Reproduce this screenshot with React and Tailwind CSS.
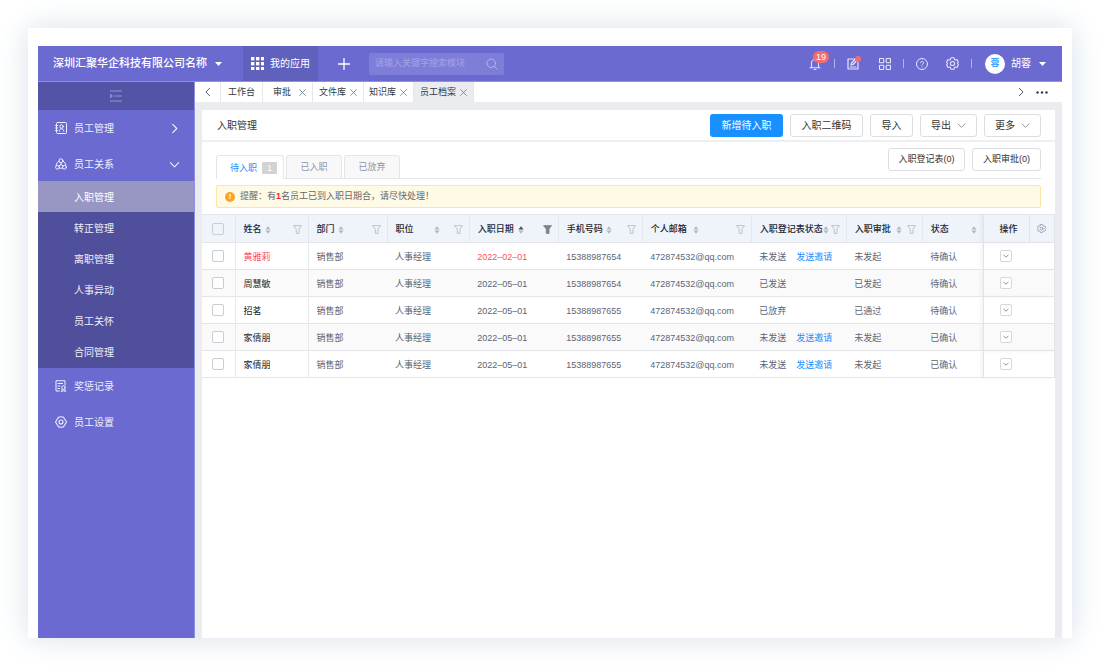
import React, { useState } from 'react';

const CRUMBS = [
  { label: '工作台', width: 'w-[42px] justify-center', closable: false },
  { label: '审批', width: 'w-[50px] justify-end gap-2 pr-[6px]', closable: true },
  { label: '文件库', width: 'w-[51px] justify-end gap-1 pr-[6px]', closable: true },
  { label: '知识库', width: 'w-[50px] justify-end gap-1 pr-[6px]', closable: true },
  { label: '员工档案', width: 'w-[60px] justify-end gap-1 pr-[6px]', closable: true },
];

const SUB_MENU = ['入职管理', '转正管理', '离职管理', '人事异动', '员工关怀', '合同管理'];

const COLUMNS = [
  { label: '姓名', width: 'w-[73px]', gap: 'gap-[3px]', filter: true },
  { label: '部门', width: 'w-[79px]', gap: 'gap-[3px]', filter: true },
  { label: '职位', width: 'w-[82px]', gap: 'gap-5', filter: true },
  { label: '入职日期', width: 'w-[89px]', gap: 'gap-1', filter: true, active: true },
  { label: '手机号码', width: 'w-[84px]', gap: 'gap-[3px]', filter: true },
  { label: '个人邮箱', width: 'w-[109px]', gap: 'gap-[6px]', filter: true },
  { label: '入职登记表状态', width: 'w-[95px]', gap: 'gap-0', filter: true },
  { label: '入职审批', width: 'w-[76px]', gap: 'gap-[5px]', filter: true },
  { label: '状态', width: 'w-[61px]', gap: 'gap-[22px]', filter: false },
];

const ROWS = [
  { id: 1, name: '黄雅莉', date: '2022–02–01', phone: '15388987654', form: '未发送', invite: true, approval: '未发起', status: '待确认', urgent: true },
  { id: 2, name: '周慧敏', date: '2022–05–01', phone: '15388987654', form: '已发送', invite: false, approval: '已发起', status: '待确认' },
  { id: 3, name: '招茗', date: '2022–05–01', phone: '15388987655', form: '已放弃', invite: false, approval: '已通过', status: '待确认' },
  { id: 4, name: '家倩朋', date: '2022–05–01', phone: '15388987655', form: '未发送', invite: true, approval: '未发起', status: '已确认' },
  { id: 5, name: '家倩朋', date: '2022–05–01', phone: '15388987655', form: '未发送', invite: true, approval: '未发起', status: '已确认' },
];

function Icon({ className, children, stroke = 1.6 }) {
  return (
    <svg className={`shrink-0 ${className}`} viewBox="0 0 24 24" fill="none" stroke="currentColor" strokeWidth={stroke} strokeLinecap="round" strokeLinejoin="round" aria-hidden="true">
      {children}
    </svg>
  );
}

const Chevron = ({ className, dir = 'down', stroke = 2 }) => (
  <Icon className={className} stroke={stroke}>
    <path d={{ down: 'M3 8l9 9 9-9', right: 'M8 3l9 9-9 9', left: 'M16 3l-9 9 9 9' }[dir]} />
  </Icon>
);

const Close = () => (
  <Icon className="size-[7px] text-slate-500" stroke={2.6}>
    <path d="M2 2l20 20M22 2L2 22" />
  </Icon>
);

const Gear = ({ className, stroke = 2 }) => (
  <Icon className={className} stroke={stroke}>
    <path d="M9.2 1.500h5.600l1 3.200 1.600.900 3.200-.700 2.400 4.700-2.100 2.400 2.100 2.400-2.400 4.700-3.200-.700-1.600.900-1 3.200H9.200l-1-3.200-1.600-.900-3.200.700L1 14.400 3.100 12 1 9.600l2.400-4.700 3.200.700 1.600-.900z" />
    <circle cx="12" cy="12" r="3.800" />
  </Icon>
);

const Caret = ({ className = '' }) => (
  <svg className={`h-1 w-[7px] fill-current ${className}`} viewBox="0 0 7 4" aria-hidden="true"><path d="M0 0h7L3.500 4z" /></svg>
);

const Sorter = ({ active }) => (
  <svg className="h-2 w-[6px] shrink-0" viewBox="0 0 6 8" aria-hidden="true">
    <path d="M3 0.200L5.600 3.400H0.400z" className={active ? 'fill-[#4a5060]' : 'fill-[#b4b7bd]'} />
    <path d="M3 7.800L5.600 4.600H0.400z" className="fill-[#b4b7bd]" />
  </svg>
);

const Funnel = ({ active }) => (
  <svg className={`size-[9px] shrink-0 ${active ? 'fill-[#7c8290] text-[#7c8290]' : 'fill-none text-[#aeb5c4]'}`} viewBox="0 0 18 18" stroke="currentColor" strokeWidth="1.600" strokeLinejoin="round" aria-hidden="true">
    <path d="M1 1.200h16l-5 7v8.600H6.500V8.200z" />
  </svg>
);

function TopBar() {
  return (
    <header className="flex h-9 items-center border-b border-[#8f8fe6] bg-[#6a6ad1] text-white">
      <button type="button" className="flex items-center gap-2 pl-[15px] text-[11px] font-medium whitespace-nowrap">
        深圳汇聚华企科技有限公司名称
        <Caret />
      </button>
      <button type="button" className="ml-[21px] flex h-full items-center gap-[6px] bg-[#6060bd] px-2 text-[10px] whitespace-nowrap">
        <svg className="size-[13px] fill-current" viewBox="0 0 13 13" aria-hidden="true">
          {[0, 5, 10].map(y => [0, 5, 10].map(x => <rect key={`${x}-${y}`} x={x} y={y} width="3.4" height="3.4" />))}
        </svg>
        我的应用
      </button>
      <button type="button" aria-label="新增" className="ml-5">
        <Icon className="size-3" stroke={2.6}><path d="M12 1v22M1 12h22" /></Icon>
      </button>
      <label className="ml-[19px] flex h-[22px] w-[135px] items-center rounded-xs bg-[#7e7ed9] px-[6px]">
        <input type="text" aria-label="搜索" placeholder="请输入关键字搜索模块" className="min-w-0 flex-1 bg-transparent pt-px text-[9px] outline-none placeholder:text-[#a3a3e8]" />
        <Icon className="size-3 text-[#b9b9ee]" stroke={1.8}><circle cx="10.5" cy="10.5" r="8.5" /><path d="M17 17l5 5" /></Icon>
      </label>
      <div className="ml-auto flex items-center pr-4 text-[#e6e6fb]">
        <button type="button" aria-label="通知" className="relative">
          <Icon className="size-3" stroke={2.2}>
            <path d="M5 19V10a7 7 0 0 1 14 0v9M2 19.500h20M10 23h4" />
          </Icon>
          <span className="absolute -top-[7px] left-1 rounded-full bg-[#f56c6c] px-[3px] text-[9px] leading-[12px] text-white">19</span>
        </button>
        <span className="ml-[13px] h-[9px] w-px bg-[#b4b4ea]" />
        <button type="button" aria-label="编辑" className="relative ml-3">
          <Icon className="size-3" stroke={2.400}>
            <path d="M16 2H2v20h20V9M6 18h12M8 14l1-4 9-9 3 3-9 9z" />
          </Icon>
          <span className="absolute -top-[2px] -right-[2px] size-[6px] rounded-full bg-[#f56c6c]" />
        </button>
        <button type="button" aria-label="应用" className="ml-5">
          <Icon className="size-3" stroke={2.200}>
            <rect x="1" y="1" width="8.500" height="8.500" rx="1.500" /><rect x="14.500" y="1" width="8.500" height="8.500" rx="1.500" />
            <rect x="1" y="14.500" width="8.500" height="8.500" rx="1.500" /><rect x="14.500" y="14.500" width="8.500" height="8.500" rx="1.500" />
          </Icon>
        </button>
        <span className="ml-3 h-[9px] w-px bg-[#b4b4ea]" />
        <button type="button" aria-label="帮助" className="ml-3">
          <Icon className="size-3" stroke={2}>
            <circle cx="12" cy="12" r="11" /><path d="M9 9.500a3 3 0 1 1 4.500 2.600c-1 .6-1.500 1.100-1.500 2.200M12 17.500v.3" />
          </Icon>
        </button>
        <button type="button" aria-label="设置" className="ml-[18px]"><Gear className="size-[13px]" /></button>
        <span className="ml-3 h-[9px] w-px bg-[#b4b4ea]" />
        <button type="button" className="ml-[13px] flex items-center gap-[6px] text-[10px] whitespace-nowrap text-white">
          <span className="flex size-5 items-center justify-center rounded-full bg-white text-[9px] font-bold text-[#3fa2ff]">蓉</span>
          胡蓉
          <Caret className="ml-[2px]" />
        </button>
      </div>
    </header>
  );
}

function MenuItem({ icon, label, arrow }) {
  return (
    <button type="button" className="flex h-9 w-full items-center gap-[7px] pr-[14px] pl-[17px] text-left text-[10px]">
      {icon}
      <span className="flex-1">{label}</span>
      {arrow && <Chevron dir={arrow} className="size-[11px]" stroke={2.4} />}
    </button>
  );
}

function Sidebar({ current, setCurrent }) {
  return (
    <nav className="w-[157px] shrink-0 border-r border-[#8f8fe6] bg-[#6a6ad1] text-[#f0f0fd]">
      <button type="button" aria-label="收起菜单" className="flex h-7 w-full items-center justify-center bg-[#5453a6] text-[#9393d2]">
        <Icon className="size-3" stroke={2}>
          <path d="M0 2h24M9 12h15M0 22h24" />
          <path d="M1 9l4 3-4 3z" fill="currentColor" />
        </Icon>
      </button>
      <MenuItem
        label="员工管理"
        arrow="right"
        icon={
          <Icon className="size-3" stroke={2}>
            <rect x="3" y="1" width="20" height="22" rx="2" />
            <path d="M1 7h4M1 12h4M1 17h4M8.500 18.500c.4-3.500 2-5 4.500-5s4.200 1.500 4.500 5" />
            <circle cx="13" cy="9" r="3.500" />
          </Icon>
        }
      />
      <MenuItem
        label="员工关系"
        arrow="down"
        icon={
          <Icon className="size-3" stroke={2}>
            <circle cx="12" cy="5.500" r="4" /><circle cx="5" cy="18.500" r="3.800" /><circle cx="19" cy="18.500" r="3.800" />
            <path d="M8 6.500C4.500 8 2.500 11 2.400 15M16 6.500c3.500 1.500 5.500 4.500 5.600 8.500M8.800 20c2 .9 4.400.9 6.400 0M12 9.500V13M8.300 15.500L12 13l3.700 2.500" />
          </Icon>
        }
      />
      <ul className="-mt-px bg-[#504f9b] pb-px text-[10px]">
        {SUB_MENU.map(item => (
          <li key={item}>
            <button type="button" onClick={() => setCurrent(item)} className={`h-[31px] w-full pt-[2px] pl-9 text-left ${item === current ? 'bg-[#9897c4] text-white' : ''}`}>
              {item}
            </button>
          </li>
        ))}
      </ul>
      <MenuItem
        label="奖惩记录"
        icon={
          <Icon className="size-3" stroke={2}>
            <path d="M9 22H2V1.500h18V10M6 7h9M6 12h4M6 17h3" />
            <circle cx="17" cy="15" r="3.500" /><path d="M14.500 18l-1.500 5 4-1.500 4 1.500-1.500-5" />
          </Icon>
        }
      />
      <MenuItem
        label="员工设置"
        icon={
          <Icon className="size-3" stroke={2.2}>
            <path d="M7 2.500Q12 .5 17 2.500L23 12l-6 9.500Q12 23.500 7 21.500L1 12z" /><circle cx="12" cy="12" r="4" />
          </Icon>
        }
      />
    </nav>
  );
}

function CrumbTabs() {
  return (
    <div className="flex h-5 items-stretch bg-white text-[9px] text-[#333a45]">
      <button type="button" aria-label="向左" className="flex w-[26px] items-center justify-center border-r border-[#e6e7ec]"><Chevron dir="left" className="size-[10px]" /></button>
      {CRUMBS.map((tab, idx) => (
        <div key={tab.label} className={`flex items-center border-r border-[#e6e7ec] pt-px ${tab.width} ${idx === CRUMBS.length - 1 ? 'bg-[#ebecf0]' : ''}`}>
          <a href="#tab" className="pt-px whitespace-nowrap">{tab.label}</a>
          {tab.closable && <button type="button" aria-label={`关闭${tab.label}`}><Close /></button>}
        </div>
      ))}
      <button type="button" aria-label="向右" className="ml-auto"><Chevron dir="right" className="size-[10px]" /></button>
      <button type="button" aria-label="更多标签" className="mr-[14px] ml-[10px]">
        <svg className="h-[3px] w-3 fill-current" viewBox="0 0 12 3" aria-hidden="true">
          <circle cx="1.500" cy="1.500" r="1.200" /><circle cx="6" cy="1.500" r="1.200" /><circle cx="10.500" cy="1.500" r="1.200" />
        </svg>
      </button>
    </div>
  );
}

function PlainButton({ className, children }) {
  return (
    <button type="button" className={`flex h-[23px] items-center justify-center gap-[6px] rounded-[3px] border border-[#dcdee2] bg-white pt-px whitespace-nowrap ${className}`}>
      {children}
    </button>
  );
}

function EmployeeTable() {
  return (
    <table className="w-full table-fixed border-t border-r border-[#e4e5e8] text-left text-[9px] text-[#5a6577]">
      <thead className="bg-[#eff4fb] text-[#22262e]">
        <tr className="h-7 border-b border-[#e4e5e8]">
          <th className="w-[33px] border-r border-[#e4e7ed]">
            <input type="checkbox" aria-label="全选" className="mx-auto block size-3 appearance-none rounded-xs border border-[#c9ccd3]" />
          </th>
          {COLUMNS.map((col, idx) => (
            <th key={col.label} className={`${col.width} border-[#e4e7ed] pt-[2px] pr-[6px] pl-2 font-medium ${idx < COLUMNS.length - 1 ? 'border-r' : ''}`}>
              <div className="flex items-center justify-between whitespace-nowrap">
                <span className={`flex items-center ${col.gap}`}>
                  {col.label}
                  <Sorter active={col.active} />
                </span>
                {col.filter && <Funnel active={col.active} />}
              </div>
            </th>
          ))}
          <th className="w-[46px] border-r border-l border-[#e1e3e8] pt-[2px] pl-1 text-center font-medium shadow-[-2px_0_4px_rgba(0,0,0,0.05)]">操作</th>
          <th className="w-[25px]"><button type="button" aria-label="列设置" className="mx-auto block text-[#8b919d]"><Gear className="size-[9px]" /></button></th>
        </tr>
      </thead>
      <tbody>
        {ROWS.map(row => (
          <tr key={row.id} className="h-[27px] border-b border-[#e4e5e8] even:bg-[#fafafa]">
            <td className="border-r border-[#e8e9ec]">
              <input type="checkbox" aria-label={row.name} className="mx-auto block size-3 appearance-none rounded-xs border border-[#c9ccd3] bg-white" />
            </td>
            <td className={`border-r border-[#e8e9ec] pt-[3px] pl-2 ${row.urgent ? 'text-[#ff4d61]' : 'text-[#22262e]'}`}>{row.name}</td>
            <td className="pt-[3px] pl-2">销售部</td>
            <td className="pt-[3px] pl-2">人事经理</td>
            <td className={`pt-[3px] pl-2 ${row.urgent ? 'text-[#ff4d61]' : ''}`}>{row.date}</td>
            <td className="pt-[3px] pl-2">{row.phone}</td>
            <td className="pt-[3px] pl-2">472874532@qq.com</td>
            <td className="pt-[3px] pl-2 whitespace-nowrap">
              {row.form}
              {row.invite && <a href="#invite" className="ml-[10px] text-[#1890ff]">发送邀请</a>}
            </td>
            <td className="pt-[3px] pl-2">{row.approval}</td>
            <td className="pt-[3px] pl-2">{row.status}</td>
            <td colSpan={2} className="border-l border-[#e1e3e8] pl-4 shadow-[-2px_0_4px_rgba(0,0,0,0.05)]">
              <button type="button" aria-label="展开操作" className="flex size-3 items-center justify-center rounded-xs border border-[#d5d7dc] bg-white text-[#8b919d]">
                <Chevron className="size-[6px]" stroke={4} />
              </button>
            </td>
          </tr>
        ))}
      </tbody>
    </table>
  );
}

export default function App() {
  const [current, setCurrent] = useState('入职管理');

  return (
    <div className="flex min-h-screen flex-col bg-white p-7 font-['Liberation_Sans','Noto_Sans_CJK_SC',sans-serif]">
      <div className="flex flex-1 flex-col bg-white px-[10px] pt-[18px] shadow-[0_0_30px_#d5e1eb]">
        <TopBar />
        <div className="flex flex-1">
          <Sidebar current={current} setCurrent={setCurrent} />
          <div className="flex min-w-0 flex-1 flex-col bg-[#ebecf0]">
            <CrumbTabs />
            <main className="mt-2 mr-[7px] ml-[7px] flex-1 bg-white text-[10px] text-[#333]">
              <div className="flex h-8 items-center justify-between border-b-2 border-[#eeeff1] pr-[14px] pl-[15px]">
                <h1 className="pt-px">入职管理</h1>
                <div className="flex gap-[7px]">
                  <button type="button" className="h-[23px] w-[73px] rounded-[3px] bg-[#1890ff] pt-px text-white">新增待入职</button>
                  <PlainButton className="w-[73px]">入职二维码</PlainButton>
                  <PlainButton className="w-[43px]">导入</PlainButton>
                  <PlainButton className="w-[57px]">导出<Chevron className="size-[9px] text-gray-500" /></PlainButton>
                  <PlainButton className="w-[57px]">更多<Chevron className="size-[9px] text-gray-500" /></PlainButton>
                </div>
              </div>
              <div className="mx-[14px] flex h-[37px] items-end justify-between border-b border-[#e4e5e8] text-[9px]">
                <div className="flex items-end gap-[2px] text-[#8c96ab]">
                  <button type="button" className="-mb-px flex h-6 w-[68px] items-center justify-end gap-[5px] rounded-t-[3px] border border-b-0 border-[#e4e5e8] bg-white pr-[6px] text-[#1890ff]">
                    <span className="pt-[2px]">待入职</span>
                    <span className="w-[15px] rounded-[1px] bg-[#d3d3d3] text-center leading-3 text-white">1</span>
                  </button>
                  <button type="button" className="h-[23px] w-14 rounded-t-[3px] border border-b-0 border-[#e4e5e8] bg-[#f8f8f8] pt-[2px]">已入职</button>
                  <button type="button" className="h-[23px] w-14 rounded-t-[3px] border border-b-0 border-[#e4e5e8] bg-[#f8f8f8] pt-[2px]">已放弃</button>
                </div>
                <div className="flex gap-[7px] pb-[7px]">
                  <PlainButton className="w-[77px]">入职登记表(0)</PlainButton>
                  <PlainButton className="w-[69px]">入职审批(0)</PlainButton>
                </div>
              </div>
              <div className="mx-[14px] my-[6px] flex h-[23px] items-center gap-[5px] rounded-[2px] border border-[#fbe6a6] bg-[#fffae6] px-2 text-[9px] text-[#666]">
                <span className="flex size-[10px] items-center justify-center rounded-full bg-[#fca326] text-[8px] font-bold text-white">!</span>
                <p className="pt-px">提醒：有<b className="text-[#f5222d]">1</b>名员工已到入职日期合，请尽快处理！</p>
              </div>
              <EmployeeTable />
            </main>
          </div>
        </div>
      </div>
    </div>
  );
}
